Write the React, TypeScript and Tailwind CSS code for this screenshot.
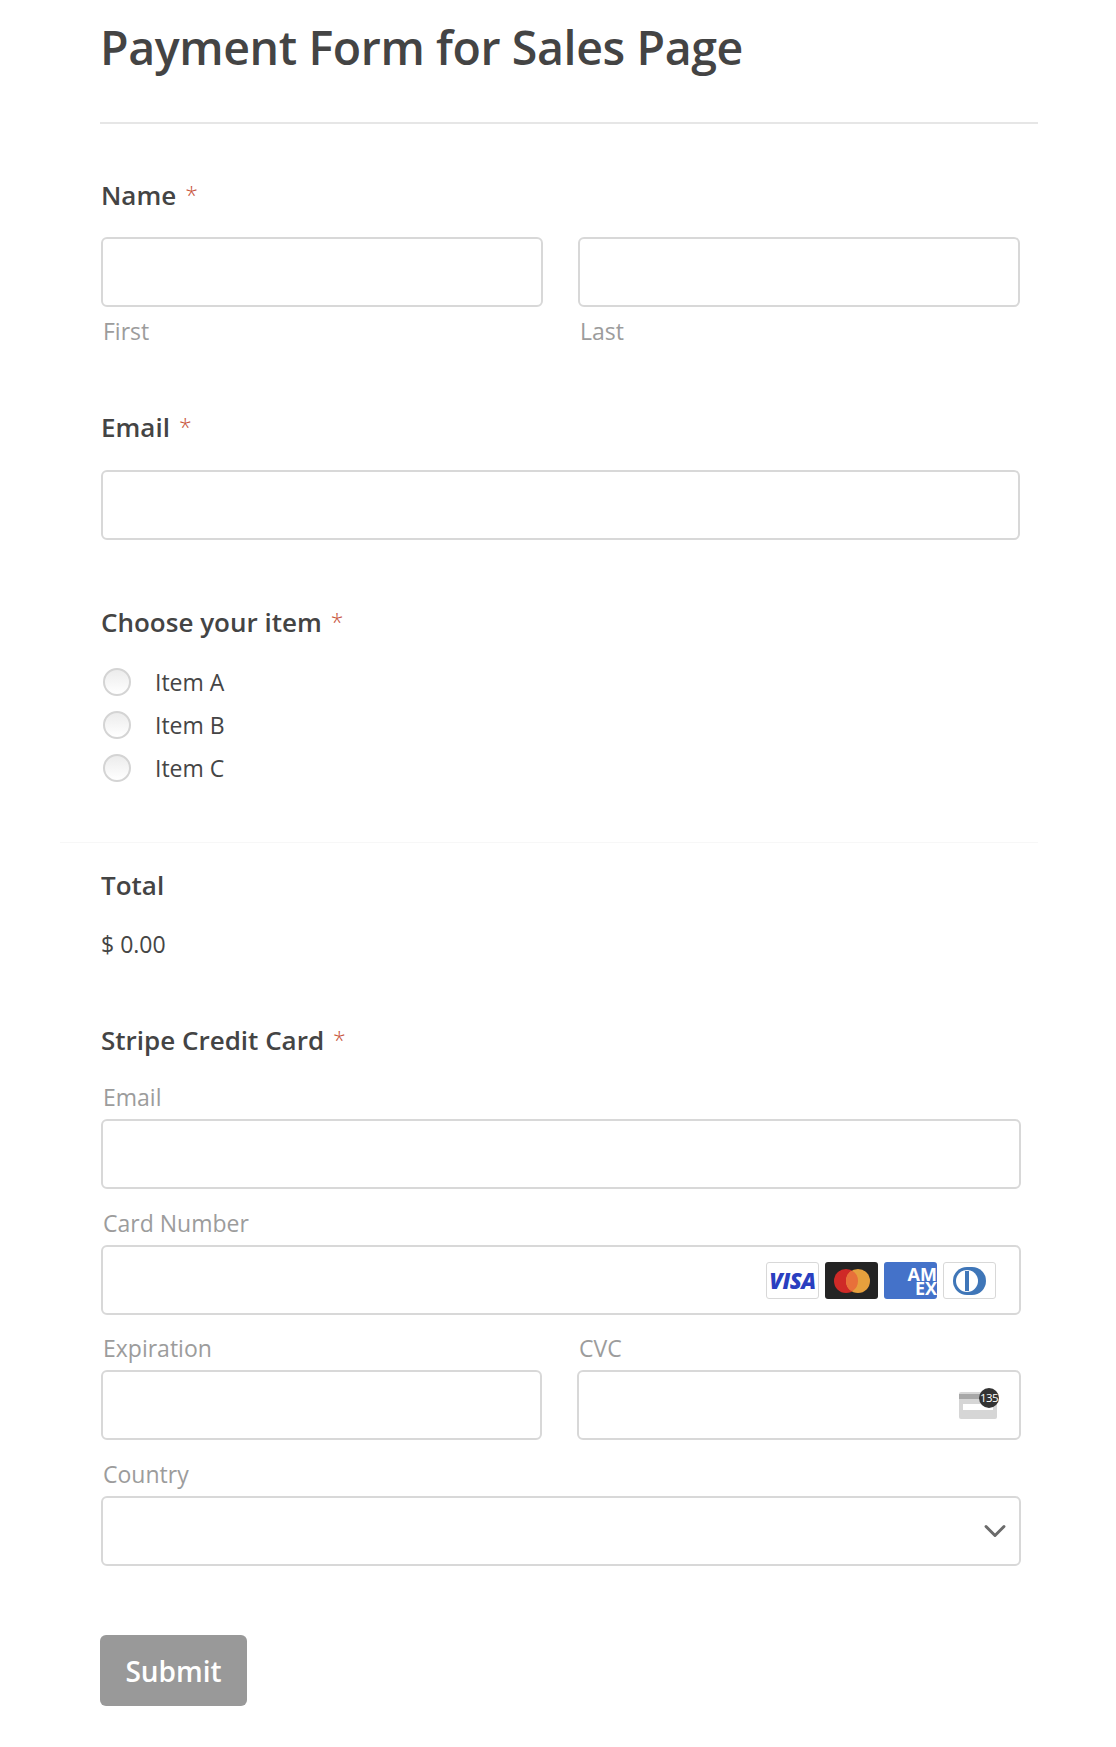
import React from "react";
import { ChevronDown } from "lucide-react";

function Label({ children, required }: { children: React.ReactNode; required?: boolean }) {
  return (
    <div className="h-[36px] text-[26px] leading-[36px] font-semibold text-[#444444]">
      {children}
      {required && <span className="ml-[9px] align-[1px] text-[23px] font-light text-[#c8553d]">*</span>}
    </div>
  );
}

function SubLabel({ children, className }: { children: React.ReactNode; className?: string }) {
  return <div className={`h-[32px] pl-[2px] text-[23px] leading-[32px] text-[#9c9c9c] ${className ?? ""}`}>{children}</div>;
}

function Field({ children, className }: { children?: React.ReactNode; className?: string }) {
  return (
    <div className={`flex h-[70px] items-center justify-end rounded-[6px] border-2 border-[#d8d8d8] bg-white ${className ?? ""}`}>
      {children}
    </div>
  );
}

function Radio({ label }: { label: string }) {
  return (
    <div className="flex h-[43px] items-center pl-[2px]">
      <span className="h-[28px] w-[28px] rounded-full border-2 border-[#d4d4d4] bg-gradient-to-b from-[#ececec] to-white" />
      <span className="ml-[24px] pt-[2px] text-[23px] text-[#454545]">{label}</span>
    </div>
  );
}

function CardBadge({ className, children }: { className: string; children?: React.ReactNode }) {
  return <div className={`flex h-[37px] w-[53px] items-center justify-center overflow-hidden rounded-[3px] ${className}`}>{children}</div>;
}

export default function App() {
  return (
    <div className="min-h-[1747px] bg-white pt-[23px] [font-family:'Open_Sans',sans-serif]">
      <div className="ml-[100px] w-[938px]">
        <h1 className="h-[48px] text-[46.5px] leading-[48px] font-semibold text-[#444444] tracking-[-0.4px]">Payment Form for Sales Page</h1>
        <div className="mt-[51px] h-[2px] bg-[#e6e6e6]" />

        <div className="mt-[53px] pl-[1px]">
          <Label required>Name</Label>
          <div className="mt-[24px] flex w-[919px] gap-[35px]">
            <div className="flex-1">
              <Field />
              <SubLabel className="mt-[8px]">First</SubLabel>
            </div>
            <div className="flex-1">
              <Field />
              <SubLabel className="mt-[8px]">Last</SubLabel>
            </div>
          </div>
          <div className="mt-[62px]">
            <Label required>Email</Label>
            <Field className="mt-[25px] w-[919px]" />
          </div>
          <div className="mt-[64px]">
            <Label required>Choose your item</Label>
            <div className="mt-[20px]">
              <Radio label="Item A" />
              <Radio label="Item B" />
              <Radio label="Item C" />
            </div>
          </div>
        </div>
      </div>

      <div className="ml-[60px] mt-[53px] h-px w-[978px] bg-[#f7f7f7]" />

      <div className="ml-[101px] mt-[24px] w-[920px]">
        <Label>Total</Label>
        <div className="mt-[25px] h-[32px] text-[23px] leading-[32px] text-[#454545]">$ 0.00</div>
        <div className="mt-[62px]">
          <Label required>Stripe Credit Card</Label>
        </div>
        <div className="mt-[23px] flex flex-col gap-[17.5px]">
          <div>
            <SubLabel className="mb-[6px]">Email</SubLabel>
            <Field />
          </div>
          <div>
            <SubLabel className="mb-[6px]">Card Number</SubLabel>
            <Field className="gap-[6px] pt-[2px] pr-[23px]">
              <CardBadge className="border border-[#d8d8d8] bg-white">
                <span className="text-[22px] font-extrabold italic text-[#2a3fc0] tracking-[-0.5px]">VISA</span>
              </CardBadge>
              <CardBadge className="bg-[#242424]">
                <svg width="36" height="24" viewBox="0 0 36 24">
                  <circle cx="12" cy="12" r="12" fill="#cf2a27" />
                  <circle cx="24" cy="12" r="12" fill="#e6a03d" />
                  <path d="M18 1.6a12 12 0 0 1 0 20.8a12 12 0 0 1 0-20.8z" fill="#e8703a" />
                </svg>
              </CardBadge>
              <CardBadge className="justify-end bg-[#4472c9]">
                <div className="flex flex-col items-end text-[18px] leading-[14px] font-bold text-white">
                  <span>AM</span>
                  <span>EX</span>
                </div>
              </CardBadge>
              <CardBadge className="border border-[#d8d8d8] bg-white">
                <svg width="33" height="28" viewBox="0 0 33 28">
                  <path d="M14 0h5a14 14 0 0 1 0 28h-5a14 14 0 0 1 0-28z" fill="#3f76b8" />
                  <circle cx="14" cy="14" r="11" fill="white" />
                  <rect x="12" y="4" width="4" height="20" fill="#3f76b8" />
                </svg>
              </CardBadge>
            </Field>
          </div>
          <div className="flex gap-[35px]">
            <div className="w-[441px]">
              <SubLabel className="mb-[6px]">Expiration</SubLabel>
              <Field />
            </div>
            <div className="flex-1">
              <SubLabel className="mb-[6px]">CVC</SubLabel>
              <Field className="pr-[22px]">
                <div className="relative mb-[2px] h-[30px] w-[38px]">
                  <div className="absolute bottom-0 left-0 h-[27px] w-[38px] rounded-[2px] bg-[#d6d6d6]" />
                  <div className="absolute left-0 top-[5px] h-[5px] w-[38px] bg-[#a8a8a8]" />
                  <div className="absolute left-[4px] top-[15px] h-[6px] w-[30px] bg-white" />
                  <div className="absolute -right-[2px] -top-[1px] flex h-[20px] w-[20px] items-center justify-center rounded-full bg-[#333333] text-[11.5px] leading-none tracking-[-0.5px] text-white">135</div>
                </div>
              </Field>
            </div>
          </div>
          <div>
            <SubLabel className="mb-[6px]">Country</SubLabel>
            <Field className="pr-[6px]">
              <ChevronDown className="h-[36px] w-[36px] text-[#6b6b6b]" strokeWidth={2} />
            </Field>
          </div>
        </div>
        <button className="mt-[69.5px] -ml-px h-[71px] w-[147px] rounded-[6px] bg-[#999999] text-[28px] font-semibold text-white">Submit</button>
      </div>
    </div>
  );
}
